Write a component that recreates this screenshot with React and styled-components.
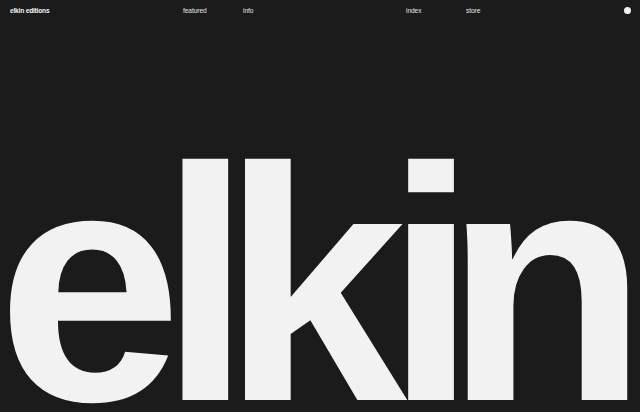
import React from "react";
import styled, { createGlobalStyle } from "styled-components";

const Global = createGlobalStyle`
  html, body { margin: 0; padding: 0; background: #1b1b1b; }
  body { font-family: "Liberation Sans", Arial, sans-serif; }
`;

const Page = styled.div`
  width: 640px;
  height: 412px;
  background: #1b1b1b;
  color: #f2f2f2;
  display: flex;
  flex-direction: column;
  overflow: hidden;
`;

const Header = styled.header`
  display: grid;
  grid-template-columns: 173px 60px 163px 60px 1fr auto;
  align-items: center;
  height: 20px;
  padding: 0 10px;
  font-size: 6.6px;
  letter-spacing: -0.01em;
`;

const Brand = styled.a`
  font-weight: 700;
  color: #f4f4f4;
  text-decoration: none;
  letter-spacing: -0.03em;
`;

const NavLink = styled.a`
  color: #e6e6e6;
  text-decoration: none;
`;

const Dot = styled.span`
  width: 7px;
  height: 7px;
  border-radius: 50%;
  background: #f4f4f4;
  margin-right: -1px;
`;

const Hero = styled.main`
  flex: 1;
  display: flex;
  align-items: flex-end;
  padding-bottom: 1px;
`;

const Word = styled.h1`
  margin: 0 0 0 -3px;
  font-family: "Liberation Sans", Arial, sans-serif;
  font-weight: 700;
  font-size: 333px;
  line-height: 0.75;
  color: #f2f2f2;
  white-space: nowrap;
`;

const Letter = styled.span`
  letter-spacing: ${(p) => p.$track}px;
`;

const letters = [
  { ch: "e", track: -23 },
  { ch: "l", track: -30 },
  { ch: "k", track: -22 },
  { ch: "i", track: -33 },
  { ch: "n", track: 0 },
];

export default function App() {
  return (
    <Page>
      <Global />
      <Header>
        <Brand href="#">elkin editions</Brand>
        <NavLink href="#">featured</NavLink>
        <NavLink href="#">info</NavLink>
        <NavLink href="#">index</NavLink>
        <NavLink href="#">store</NavLink>
        <Dot />
      </Header>
      <Hero>
        <Word aria-label="elkin">
          {letters.map((l) => (
            <Letter key={l.ch} $track={l.track}>
              {l.ch}
            </Letter>
          ))}
        </Word>
      </Hero>
    </Page>
  );
}
